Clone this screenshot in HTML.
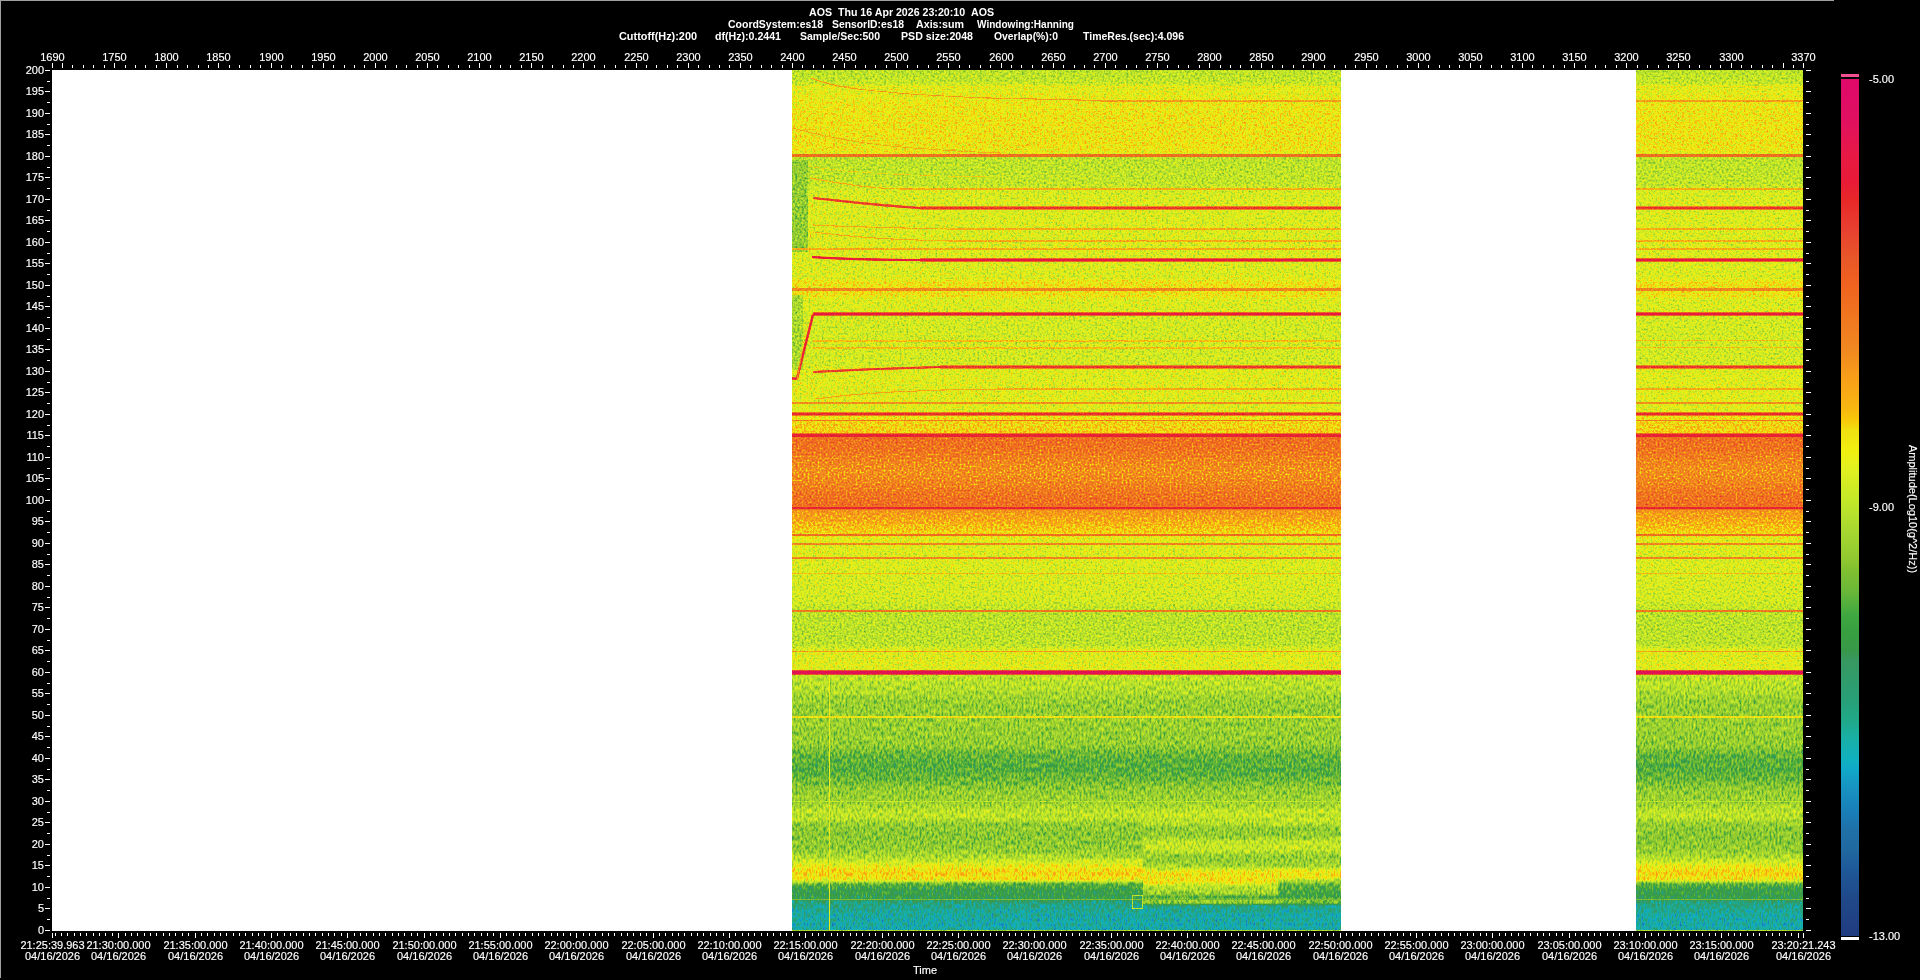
<!DOCTYPE html><html><head><meta charset="utf-8"><style>html,body{margin:0;padding:0;background:#000;overflow:hidden}svg{display:block;will-change:transform}text{font-family:"Liberation Sans", sans-serif;fill:#fff;stroke:#fff;stroke-width:0.15px}text[font-weight]{stroke:none}</style></head><body>
<svg width="1920" height="980" viewBox="0 0 1920 980" shape-rendering="crispEdges">
<defs><linearGradient id="sg" gradientUnits="userSpaceOnUse" x1="0" y1="70" x2="0" y2="931"><stop offset="0.0000" stop-color="#808080"/><stop offset="0.0139" stop-color="#828282"/><stop offset="0.0209" stop-color="#8c8c8c"/><stop offset="0.0325" stop-color="#8f8f8f"/><stop offset="0.0372" stop-color="#919191"/><stop offset="0.0581" stop-color="#939393"/><stop offset="0.0871" stop-color="#939393"/><stop offset="0.0952" stop-color="#919191"/><stop offset="0.1010" stop-color="#808080"/><stop offset="0.1336" stop-color="#828282"/><stop offset="0.1394" stop-color="#888888"/><stop offset="0.1568" stop-color="#8a8a8a"/><stop offset="0.2184" stop-color="#8a8a8a"/><stop offset="0.2416" stop-color="#8a8a8a"/><stop offset="0.2462" stop-color="#939393"/><stop offset="0.2625" stop-color="#939393"/><stop offset="0.2671" stop-color="#8a8a8a"/><stop offset="0.2811" stop-color="#8a8a8a"/><stop offset="0.2857" stop-color="#878787"/><stop offset="0.3426" stop-color="#878787"/><stop offset="0.3461" stop-color="#8b8b8b"/><stop offset="0.3972" stop-color="#8c8c8c"/><stop offset="0.4019" stop-color="#919191"/><stop offset="0.4088" stop-color="#989898"/><stop offset="0.4216" stop-color="#999999"/><stop offset="0.4274" stop-color="#bdbdbd"/><stop offset="0.4413" stop-color="#bababa"/><stop offset="0.4553" stop-color="#b1b1b1"/><stop offset="0.4669" stop-color="#adadad"/><stop offset="0.4785" stop-color="#b1b1b1"/><stop offset="0.4936" stop-color="#bababa"/><stop offset="0.5064" stop-color="#bdbdbd"/><stop offset="0.5110" stop-color="#ababab"/><stop offset="0.5226" stop-color="#a4a4a4"/><stop offset="0.5366" stop-color="#999999"/><stop offset="0.5459" stop-color="#8c8c8c"/><stop offset="0.6156" stop-color="#878787"/><stop offset="0.6295" stop-color="#808080"/><stop offset="0.6678" stop-color="#808080"/><stop offset="0.6736" stop-color="#8b8b8b"/><stop offset="0.6969" stop-color="#8c8c8c"/><stop offset="0.7038" stop-color="#808080"/><stop offset="0.7201" stop-color="#7d7d7d"/><stop offset="0.7317" stop-color="#757575"/><stop offset="0.7456" stop-color="#737373"/><stop offset="0.7549" stop-color="#757575"/><stop offset="0.7840" stop-color="#737373"/><stop offset="0.7967" stop-color="#666666"/><stop offset="0.8130" stop-color="#636363"/><stop offset="0.8246" stop-color="#696969"/><stop offset="0.8362" stop-color="#737373"/><stop offset="0.8502" stop-color="#757575"/><stop offset="0.8618" stop-color="#808080"/><stop offset="0.8688" stop-color="#808080"/><stop offset="0.8757" stop-color="#737373"/><stop offset="0.8885" stop-color="#707070"/><stop offset="0.9059" stop-color="#737373"/><stop offset="0.9152" stop-color="#7d7d7d"/><stop offset="0.9245" stop-color="#8f8f8f"/><stop offset="0.9326" stop-color="#999999"/><stop offset="0.9408" stop-color="#919191"/><stop offset="0.9454" stop-color="#666666"/><stop offset="0.9524" stop-color="#595959"/><stop offset="0.9617" stop-color="#575757"/><stop offset="0.9675" stop-color="#454545"/><stop offset="0.9814" stop-color="#3c3c3c"/><stop offset="1.0000" stop-color="#393939"/></linearGradient><linearGradient id="pg1" gradientUnits="userSpaceOnUse" x1="0" y1="780" x2="0" y2="906"><stop offset="0.0000" stop-color="#696969"/><stop offset="0.0794" stop-color="#737373"/><stop offset="0.1984" stop-color="#787878"/><stop offset="0.2540" stop-color="#828282"/><stop offset="0.3333" stop-color="#808080"/><stop offset="0.3810" stop-color="#737373"/><stop offset="0.4444" stop-color="#737373"/><stop offset="0.4921" stop-color="#828282"/><stop offset="0.5556" stop-color="#828282"/><stop offset="0.6032" stop-color="#737373"/><stop offset="0.6825" stop-color="#787878"/><stop offset="0.7302" stop-color="#939393"/><stop offset="0.8095" stop-color="#949494"/><stop offset="0.8413" stop-color="#808080"/><stop offset="0.9048" stop-color="#757575"/><stop offset="0.9286" stop-color="#5e5e5e"/><stop offset="0.9524" stop-color="#757575"/><stop offset="0.9762" stop-color="#737373"/><stop offset="1.0000" stop-color="#424242"/></linearGradient><linearGradient id="pg2" gradientUnits="userSpaceOnUse" x1="0" y1="878" x2="0" y2="906"><stop offset="0.0000" stop-color="#919191"/><stop offset="0.2143" stop-color="#666666"/><stop offset="0.6786" stop-color="#5c5c5c"/><stop offset="0.7857" stop-color="#6e6e6e"/><stop offset="0.8929" stop-color="#696969"/><stop offset="1.0000" stop-color="#424242"/></linearGradient><filter id="uf1" x="0" y="0" width="1" height="1" color-interpolation-filters="sRGB"><feTurbulence type="fractalNoise" baseFrequency="0.45" numOctaves="2" seed="3" result="t"/><feColorMatrix in="t" type="matrix" values="1 0 0 0 0 1 0 0 0 0 1 0 0 0 0 0 0 0 0 1" result="n0"/><feComponentTransfer in="n0" result="n"><feFuncR type="table" tableValues="0.000 0.080 0.185 0.290 0.395 0.500 0.580 0.660 0.740 0.820 0.900"/><feFuncG type="table" tableValues="0.000 0.080 0.185 0.290 0.395 0.500 0.580 0.660 0.740 0.820 0.900"/><feFuncB type="table" tableValues="0.000 0.080 0.185 0.290 0.395 0.500 0.580 0.660 0.740 0.820 0.900"/></feComponentTransfer><feComposite in="SourceGraphic" in2="n" operator="arithmetic" k1="0" k2="1" k3="0.3" k4="-0.15" result="v"/><feComponentTransfer in="v" result="c"><feFuncR type="table" tableValues="0.125 0.125 0.125 0.124 0.121 0.118 0.123 0.125 0.124 0.103 0.094 0.092 0.071 0.063 0.081 0.101 0.123 0.144 0.165 0.186 0.207 0.220 0.220 0.224 0.251 0.344 0.431 0.484 0.557 0.603 0.645 0.691 0.740 0.789 0.838 0.887 0.934 0.941 0.951 0.973 0.973 0.973 0.966 0.952 0.941 0.941 0.941 0.941 0.941 0.940 0.920 0.910 0.910 0.910 0.910 0.910 0.910 0.910 0.909 0.899 0.888 0.878 0.878 0.878 0.878"/><feFuncG type="table" tableValues="0.235 0.253 0.270 0.291 0.319 0.348 0.391 0.420 0.442 0.485 0.527 0.572 0.633 0.685 0.690 0.683 0.662 0.640 0.623 0.613 0.602 0.596 0.609 0.632 0.659 0.693 0.725 0.746 0.780 0.810 0.838 0.866 0.894 0.916 0.930 0.941 0.941 0.908 0.849 0.746 0.692 0.650 0.608 0.566 0.527 0.499 0.471 0.439 0.407 0.376 0.355 0.324 0.282 0.240 0.198 0.156 0.119 0.102 0.101 0.088 0.075 0.062 0.052 0.042 0.031"/><feFuncB type="table" tableValues="0.502 0.514 0.525 0.542 0.570 0.598 0.619 0.640 0.662 0.704 0.734 0.755 0.776 0.758 0.699 0.629 0.544 0.496 0.458 0.427 0.395 0.328 0.269 0.251 0.251 0.234 0.217 0.195 0.188 0.188 0.188 0.179 0.165 0.151 0.137 0.117 0.070 0.063 0.053 0.051 0.073 0.087 0.101 0.115 0.125 0.125 0.125 0.125 0.125 0.126 0.147 0.164 0.178 0.185 0.171 0.158 0.201 0.231 0.254 0.296 0.338 0.377 0.390 0.403 0.416"/></feComponentTransfer><feGaussianBlur in="c" stdDeviation="0.5" result="cb"/><feComposite in="cb" in2="SourceAlpha" operator="in"/></filter><filter id="uf2" x="0" y="0" width="1" height="1" color-interpolation-filters="sRGB"><feTurbulence type="fractalNoise" baseFrequency="0.45" numOctaves="2" seed="7" result="t"/><feColorMatrix in="t" type="matrix" values="1 0 0 0 0 1 0 0 0 0 1 0 0 0 0 0 0 0 0 1" result="n0"/><feComponentTransfer in="n0" result="n"><feFuncR type="table" tableValues="0.000 0.080 0.185 0.290 0.395 0.500 0.580 0.660 0.740 0.820 0.900"/><feFuncG type="table" tableValues="0.000 0.080 0.185 0.290 0.395 0.500 0.580 0.660 0.740 0.820 0.900"/><feFuncB type="table" tableValues="0.000 0.080 0.185 0.290 0.395 0.500 0.580 0.660 0.740 0.820 0.900"/></feComponentTransfer><feComposite in="SourceGraphic" in2="n" operator="arithmetic" k1="0" k2="1" k3="0.3" k4="-0.15" result="v"/><feComponentTransfer in="v" result="c"><feFuncR type="table" tableValues="0.125 0.125 0.125 0.124 0.121 0.118 0.123 0.125 0.124 0.103 0.094 0.092 0.071 0.063 0.081 0.101 0.123 0.144 0.165 0.186 0.207 0.220 0.220 0.224 0.251 0.344 0.431 0.484 0.557 0.603 0.645 0.691 0.740 0.789 0.838 0.887 0.934 0.941 0.951 0.973 0.973 0.973 0.966 0.952 0.941 0.941 0.941 0.941 0.941 0.940 0.920 0.910 0.910 0.910 0.910 0.910 0.910 0.910 0.909 0.899 0.888 0.878 0.878 0.878 0.878"/><feFuncG type="table" tableValues="0.235 0.253 0.270 0.291 0.319 0.348 0.391 0.420 0.442 0.485 0.527 0.572 0.633 0.685 0.690 0.683 0.662 0.640 0.623 0.613 0.602 0.596 0.609 0.632 0.659 0.693 0.725 0.746 0.780 0.810 0.838 0.866 0.894 0.916 0.930 0.941 0.941 0.908 0.849 0.746 0.692 0.650 0.608 0.566 0.527 0.499 0.471 0.439 0.407 0.376 0.355 0.324 0.282 0.240 0.198 0.156 0.119 0.102 0.101 0.088 0.075 0.062 0.052 0.042 0.031"/><feFuncB type="table" tableValues="0.502 0.514 0.525 0.542 0.570 0.598 0.619 0.640 0.662 0.704 0.734 0.755 0.776 0.758 0.699 0.629 0.544 0.496 0.458 0.427 0.395 0.328 0.269 0.251 0.251 0.234 0.217 0.195 0.188 0.188 0.188 0.179 0.165 0.151 0.137 0.117 0.070 0.063 0.053 0.051 0.073 0.087 0.101 0.115 0.125 0.125 0.125 0.125 0.125 0.126 0.147 0.164 0.178 0.185 0.171 0.158 0.201 0.231 0.254 0.296 0.338 0.377 0.390 0.403 0.416"/></feComponentTransfer><feGaussianBlur in="c" stdDeviation="0.5" result="cb"/><feComposite in="cb" in2="SourceAlpha" operator="in"/></filter><filter id="hf1" x="0" y="0" width="1" height="1" color-interpolation-filters="sRGB"><feTurbulence type="fractalNoise" baseFrequency="0.5" numOctaves="2" seed="17" result="t"/><feColorMatrix in="t" type="matrix" values="1 0 0 0 0 1 0 0 0 0 1 0 0 0 0 0 0 0 0 1" result="n0"/><feComponentTransfer in="n0" result="n"><feFuncR type="table" tableValues="0.000 0.080 0.185 0.290 0.395 0.500 0.580 0.660 0.740 0.820 0.900"/><feFuncG type="table" tableValues="0.000 0.080 0.185 0.290 0.395 0.500 0.580 0.660 0.740 0.820 0.900"/><feFuncB type="table" tableValues="0.000 0.080 0.185 0.290 0.395 0.500 0.580 0.660 0.740 0.820 0.900"/></feComponentTransfer><feComposite in="SourceGraphic" in2="n" operator="arithmetic" k1="0" k2="1" k3="0.42" k4="-0.21" result="v"/><feComponentTransfer in="v" result="c"><feFuncR type="table" tableValues="0.125 0.125 0.125 0.124 0.121 0.118 0.123 0.125 0.124 0.103 0.094 0.092 0.071 0.063 0.081 0.101 0.123 0.144 0.165 0.186 0.207 0.220 0.220 0.224 0.251 0.344 0.431 0.484 0.557 0.603 0.645 0.691 0.740 0.789 0.838 0.887 0.934 0.941 0.951 0.973 0.973 0.973 0.966 0.952 0.941 0.941 0.941 0.941 0.941 0.940 0.920 0.910 0.910 0.910 0.910 0.910 0.910 0.910 0.909 0.899 0.888 0.878 0.878 0.878 0.878"/><feFuncG type="table" tableValues="0.235 0.253 0.270 0.291 0.319 0.348 0.391 0.420 0.442 0.485 0.527 0.572 0.633 0.685 0.690 0.683 0.662 0.640 0.623 0.613 0.602 0.596 0.609 0.632 0.659 0.693 0.725 0.746 0.780 0.810 0.838 0.866 0.894 0.916 0.930 0.941 0.941 0.908 0.849 0.746 0.692 0.650 0.608 0.566 0.527 0.499 0.471 0.439 0.407 0.376 0.355 0.324 0.282 0.240 0.198 0.156 0.119 0.102 0.101 0.088 0.075 0.062 0.052 0.042 0.031"/><feFuncB type="table" tableValues="0.502 0.514 0.525 0.542 0.570 0.598 0.619 0.640 0.662 0.704 0.734 0.755 0.776 0.758 0.699 0.629 0.544 0.496 0.458 0.427 0.395 0.328 0.269 0.251 0.251 0.234 0.217 0.195 0.188 0.188 0.188 0.179 0.165 0.151 0.137 0.117 0.070 0.063 0.053 0.051 0.073 0.087 0.101 0.115 0.125 0.125 0.125 0.125 0.125 0.126 0.147 0.164 0.178 0.185 0.171 0.158 0.201 0.231 0.254 0.296 0.338 0.377 0.390 0.403 0.416"/></feComponentTransfer><feGaussianBlur in="c" stdDeviation="0.5" result="cb"/><feComposite in="cb" in2="SourceAlpha" operator="in"/></filter><filter id="hf2" x="0" y="0" width="1" height="1" color-interpolation-filters="sRGB"><feTurbulence type="fractalNoise" baseFrequency="0.5" numOctaves="2" seed="19" result="t"/><feColorMatrix in="t" type="matrix" values="1 0 0 0 0 1 0 0 0 0 1 0 0 0 0 0 0 0 0 1" result="n0"/><feComponentTransfer in="n0" result="n"><feFuncR type="table" tableValues="0.000 0.080 0.185 0.290 0.395 0.500 0.580 0.660 0.740 0.820 0.900"/><feFuncG type="table" tableValues="0.000 0.080 0.185 0.290 0.395 0.500 0.580 0.660 0.740 0.820 0.900"/><feFuncB type="table" tableValues="0.000 0.080 0.185 0.290 0.395 0.500 0.580 0.660 0.740 0.820 0.900"/></feComponentTransfer><feComposite in="SourceGraphic" in2="n" operator="arithmetic" k1="0" k2="1" k3="0.42" k4="-0.21" result="v"/><feComponentTransfer in="v" result="c"><feFuncR type="table" tableValues="0.125 0.125 0.125 0.124 0.121 0.118 0.123 0.125 0.124 0.103 0.094 0.092 0.071 0.063 0.081 0.101 0.123 0.144 0.165 0.186 0.207 0.220 0.220 0.224 0.251 0.344 0.431 0.484 0.557 0.603 0.645 0.691 0.740 0.789 0.838 0.887 0.934 0.941 0.951 0.973 0.973 0.973 0.966 0.952 0.941 0.941 0.941 0.941 0.941 0.940 0.920 0.910 0.910 0.910 0.910 0.910 0.910 0.910 0.909 0.899 0.888 0.878 0.878 0.878 0.878"/><feFuncG type="table" tableValues="0.235 0.253 0.270 0.291 0.319 0.348 0.391 0.420 0.442 0.485 0.527 0.572 0.633 0.685 0.690 0.683 0.662 0.640 0.623 0.613 0.602 0.596 0.609 0.632 0.659 0.693 0.725 0.746 0.780 0.810 0.838 0.866 0.894 0.916 0.930 0.941 0.941 0.908 0.849 0.746 0.692 0.650 0.608 0.566 0.527 0.499 0.471 0.439 0.407 0.376 0.355 0.324 0.282 0.240 0.198 0.156 0.119 0.102 0.101 0.088 0.075 0.062 0.052 0.042 0.031"/><feFuncB type="table" tableValues="0.502 0.514 0.525 0.542 0.570 0.598 0.619 0.640 0.662 0.704 0.734 0.755 0.776 0.758 0.699 0.629 0.544 0.496 0.458 0.427 0.395 0.328 0.269 0.251 0.251 0.234 0.217 0.195 0.188 0.188 0.188 0.179 0.165 0.151 0.137 0.117 0.070 0.063 0.053 0.051 0.073 0.087 0.101 0.115 0.125 0.125 0.125 0.125 0.125 0.126 0.147 0.164 0.178 0.185 0.171 0.158 0.201 0.231 0.254 0.296 0.338 0.377 0.390 0.403 0.416"/></feComponentTransfer><feGaussianBlur in="c" stdDeviation="0.5" result="cb"/><feComposite in="cb" in2="SourceAlpha" operator="in"/></filter><filter id="bf1" x="0" y="0" width="1" height="1" color-interpolation-filters="sRGB"><feTurbulence type="fractalNoise" baseFrequency="0.5 0.22" numOctaves="2" seed="5" result="t"/><feColorMatrix in="t" type="matrix" values="1 0 0 0 0 1 0 0 0 0 1 0 0 0 0 0 0 0 0 1" result="n0"/><feComponentTransfer in="n0" result="n"><feFuncR type="table" tableValues="0.000 0.080 0.185 0.290 0.395 0.500 0.580 0.660 0.740 0.820 0.900"/><feFuncG type="table" tableValues="0.000 0.080 0.185 0.290 0.395 0.500 0.580 0.660 0.740 0.820 0.900"/><feFuncB type="table" tableValues="0.000 0.080 0.185 0.290 0.395 0.500 0.580 0.660 0.740 0.820 0.900"/></feComponentTransfer><feComposite in="SourceGraphic" in2="n" operator="arithmetic" k1="0" k2="1" k3="0.3" k4="-0.15" result="v"/><feComponentTransfer in="v" result="c"><feFuncR type="table" tableValues="0.125 0.125 0.125 0.124 0.121 0.118 0.123 0.125 0.124 0.103 0.094 0.092 0.071 0.063 0.081 0.101 0.123 0.144 0.165 0.186 0.207 0.220 0.220 0.224 0.251 0.344 0.431 0.484 0.557 0.603 0.645 0.691 0.740 0.789 0.838 0.887 0.934 0.941 0.951 0.973 0.973 0.973 0.966 0.952 0.941 0.941 0.941 0.941 0.941 0.940 0.920 0.910 0.910 0.910 0.910 0.910 0.910 0.910 0.909 0.899 0.888 0.878 0.878 0.878 0.878"/><feFuncG type="table" tableValues="0.235 0.253 0.270 0.291 0.319 0.348 0.391 0.420 0.442 0.485 0.527 0.572 0.633 0.685 0.690 0.683 0.662 0.640 0.623 0.613 0.602 0.596 0.609 0.632 0.659 0.693 0.725 0.746 0.780 0.810 0.838 0.866 0.894 0.916 0.930 0.941 0.941 0.908 0.849 0.746 0.692 0.650 0.608 0.566 0.527 0.499 0.471 0.439 0.407 0.376 0.355 0.324 0.282 0.240 0.198 0.156 0.119 0.102 0.101 0.088 0.075 0.062 0.052 0.042 0.031"/><feFuncB type="table" tableValues="0.502 0.514 0.525 0.542 0.570 0.598 0.619 0.640 0.662 0.704 0.734 0.755 0.776 0.758 0.699 0.629 0.544 0.496 0.458 0.427 0.395 0.328 0.269 0.251 0.251 0.234 0.217 0.195 0.188 0.188 0.188 0.179 0.165 0.151 0.137 0.117 0.070 0.063 0.053 0.051 0.073 0.087 0.101 0.115 0.125 0.125 0.125 0.125 0.125 0.126 0.147 0.164 0.178 0.185 0.171 0.158 0.201 0.231 0.254 0.296 0.338 0.377 0.390 0.403 0.416"/></feComponentTransfer><feGaussianBlur in="c" stdDeviation="0.5" result="cb"/><feComposite in="cb" in2="SourceAlpha" operator="in"/></filter><filter id="bf2" x="0" y="0" width="1" height="1" color-interpolation-filters="sRGB"><feTurbulence type="fractalNoise" baseFrequency="0.5 0.22" numOctaves="2" seed="9" result="t"/><feColorMatrix in="t" type="matrix" values="1 0 0 0 0 1 0 0 0 0 1 0 0 0 0 0 0 0 0 1" result="n0"/><feComponentTransfer in="n0" result="n"><feFuncR type="table" tableValues="0.000 0.080 0.185 0.290 0.395 0.500 0.580 0.660 0.740 0.820 0.900"/><feFuncG type="table" tableValues="0.000 0.080 0.185 0.290 0.395 0.500 0.580 0.660 0.740 0.820 0.900"/><feFuncB type="table" tableValues="0.000 0.080 0.185 0.290 0.395 0.500 0.580 0.660 0.740 0.820 0.900"/></feComponentTransfer><feComposite in="SourceGraphic" in2="n" operator="arithmetic" k1="0" k2="1" k3="0.3" k4="-0.15" result="v"/><feComponentTransfer in="v" result="c"><feFuncR type="table" tableValues="0.125 0.125 0.125 0.124 0.121 0.118 0.123 0.125 0.124 0.103 0.094 0.092 0.071 0.063 0.081 0.101 0.123 0.144 0.165 0.186 0.207 0.220 0.220 0.224 0.251 0.344 0.431 0.484 0.557 0.603 0.645 0.691 0.740 0.789 0.838 0.887 0.934 0.941 0.951 0.973 0.973 0.973 0.966 0.952 0.941 0.941 0.941 0.941 0.941 0.940 0.920 0.910 0.910 0.910 0.910 0.910 0.910 0.910 0.909 0.899 0.888 0.878 0.878 0.878 0.878"/><feFuncG type="table" tableValues="0.235 0.253 0.270 0.291 0.319 0.348 0.391 0.420 0.442 0.485 0.527 0.572 0.633 0.685 0.690 0.683 0.662 0.640 0.623 0.613 0.602 0.596 0.609 0.632 0.659 0.693 0.725 0.746 0.780 0.810 0.838 0.866 0.894 0.916 0.930 0.941 0.941 0.908 0.849 0.746 0.692 0.650 0.608 0.566 0.527 0.499 0.471 0.439 0.407 0.376 0.355 0.324 0.282 0.240 0.198 0.156 0.119 0.102 0.101 0.088 0.075 0.062 0.052 0.042 0.031"/><feFuncB type="table" tableValues="0.502 0.514 0.525 0.542 0.570 0.598 0.619 0.640 0.662 0.704 0.734 0.755 0.776 0.758 0.699 0.629 0.544 0.496 0.458 0.427 0.395 0.328 0.269 0.251 0.251 0.234 0.217 0.195 0.188 0.188 0.188 0.179 0.165 0.151 0.137 0.117 0.070 0.063 0.053 0.051 0.073 0.087 0.101 0.115 0.125 0.125 0.125 0.125 0.125 0.126 0.147 0.164 0.178 0.185 0.171 0.158 0.201 0.231 0.254 0.296 0.338 0.377 0.390 0.403 0.416"/></feComponentTransfer><feGaussianBlur in="c" stdDeviation="0.5" result="cb"/><feComposite in="cb" in2="SourceAlpha" operator="in"/></filter><filter id="lf1" x="0" y="0" width="1" height="1" color-interpolation-filters="sRGB"><feTurbulence type="fractalNoise" baseFrequency="0.7" numOctaves="2" seed="11" result="t"/><feColorMatrix in="t" type="matrix" values="1 0 0 0 0 1 0 0 0 0 1 0 0 0 0 0 0 0 0 1" result="n0"/><feComponentTransfer in="n0" result="n"><feFuncR type="table" tableValues="0.000 0.080 0.185 0.290 0.395 0.500 0.580 0.660 0.740 0.820 0.900"/><feFuncG type="table" tableValues="0.000 0.080 0.185 0.290 0.395 0.500 0.580 0.660 0.740 0.820 0.900"/><feFuncB type="table" tableValues="0.000 0.080 0.185 0.290 0.395 0.500 0.580 0.660 0.740 0.820 0.900"/></feComponentTransfer><feComposite in="SourceGraphic" in2="n" operator="arithmetic" k1="0" k2="1" k3="0.22" k4="-0.11" result="v"/><feComponentTransfer in="v" result="c"><feFuncR type="table" tableValues="0.125 0.125 0.125 0.124 0.121 0.118 0.123 0.125 0.124 0.103 0.094 0.092 0.071 0.063 0.081 0.101 0.123 0.144 0.165 0.186 0.207 0.220 0.220 0.224 0.251 0.344 0.431 0.484 0.557 0.603 0.645 0.691 0.740 0.789 0.838 0.887 0.934 0.941 0.951 0.973 0.973 0.973 0.966 0.952 0.941 0.941 0.941 0.941 0.941 0.940 0.920 0.910 0.910 0.910 0.910 0.910 0.910 0.910 0.909 0.899 0.888 0.878 0.878 0.878 0.878"/><feFuncG type="table" tableValues="0.235 0.253 0.270 0.291 0.319 0.348 0.391 0.420 0.442 0.485 0.527 0.572 0.633 0.685 0.690 0.683 0.662 0.640 0.623 0.613 0.602 0.596 0.609 0.632 0.659 0.693 0.725 0.746 0.780 0.810 0.838 0.866 0.894 0.916 0.930 0.941 0.941 0.908 0.849 0.746 0.692 0.650 0.608 0.566 0.527 0.499 0.471 0.439 0.407 0.376 0.355 0.324 0.282 0.240 0.198 0.156 0.119 0.102 0.101 0.088 0.075 0.062 0.052 0.042 0.031"/><feFuncB type="table" tableValues="0.502 0.514 0.525 0.542 0.570 0.598 0.619 0.640 0.662 0.704 0.734 0.755 0.776 0.758 0.699 0.629 0.544 0.496 0.458 0.427 0.395 0.328 0.269 0.251 0.251 0.234 0.217 0.195 0.188 0.188 0.188 0.179 0.165 0.151 0.137 0.117 0.070 0.063 0.053 0.051 0.073 0.087 0.101 0.115 0.125 0.125 0.125 0.125 0.125 0.126 0.147 0.164 0.178 0.185 0.171 0.158 0.201 0.231 0.254 0.296 0.338 0.377 0.390 0.403 0.416"/></feComponentTransfer><feGaussianBlur in="c" stdDeviation="0.5" result="cb"/><feComposite in="cb" in2="SourceAlpha" operator="in"/></filter><filter id="lf2" x="0" y="0" width="1" height="1" color-interpolation-filters="sRGB"><feTurbulence type="fractalNoise" baseFrequency="0.7" numOctaves="2" seed="13" result="t"/><feColorMatrix in="t" type="matrix" values="1 0 0 0 0 1 0 0 0 0 1 0 0 0 0 0 0 0 0 1" result="n0"/><feComponentTransfer in="n0" result="n"><feFuncR type="table" tableValues="0.000 0.080 0.185 0.290 0.395 0.500 0.580 0.660 0.740 0.820 0.900"/><feFuncG type="table" tableValues="0.000 0.080 0.185 0.290 0.395 0.500 0.580 0.660 0.740 0.820 0.900"/><feFuncB type="table" tableValues="0.000 0.080 0.185 0.290 0.395 0.500 0.580 0.660 0.740 0.820 0.900"/></feComponentTransfer><feComposite in="SourceGraphic" in2="n" operator="arithmetic" k1="0" k2="1" k3="0.22" k4="-0.11" result="v"/><feComponentTransfer in="v" result="c"><feFuncR type="table" tableValues="0.125 0.125 0.125 0.124 0.121 0.118 0.123 0.125 0.124 0.103 0.094 0.092 0.071 0.063 0.081 0.101 0.123 0.144 0.165 0.186 0.207 0.220 0.220 0.224 0.251 0.344 0.431 0.484 0.557 0.603 0.645 0.691 0.740 0.789 0.838 0.887 0.934 0.941 0.951 0.973 0.973 0.973 0.966 0.952 0.941 0.941 0.941 0.941 0.941 0.940 0.920 0.910 0.910 0.910 0.910 0.910 0.910 0.910 0.909 0.899 0.888 0.878 0.878 0.878 0.878"/><feFuncG type="table" tableValues="0.235 0.253 0.270 0.291 0.319 0.348 0.391 0.420 0.442 0.485 0.527 0.572 0.633 0.685 0.690 0.683 0.662 0.640 0.623 0.613 0.602 0.596 0.609 0.632 0.659 0.693 0.725 0.746 0.780 0.810 0.838 0.866 0.894 0.916 0.930 0.941 0.941 0.908 0.849 0.746 0.692 0.650 0.608 0.566 0.527 0.499 0.471 0.439 0.407 0.376 0.355 0.324 0.282 0.240 0.198 0.156 0.119 0.102 0.101 0.088 0.075 0.062 0.052 0.042 0.031"/><feFuncB type="table" tableValues="0.502 0.514 0.525 0.542 0.570 0.598 0.619 0.640 0.662 0.704 0.734 0.755 0.776 0.758 0.699 0.629 0.544 0.496 0.458 0.427 0.395 0.328 0.269 0.251 0.251 0.234 0.217 0.195 0.188 0.188 0.188 0.179 0.165 0.151 0.137 0.117 0.070 0.063 0.053 0.051 0.073 0.087 0.101 0.115 0.125 0.125 0.125 0.125 0.125 0.126 0.147 0.164 0.178 0.185 0.171 0.158 0.201 0.231 0.254 0.296 0.338 0.377 0.390 0.403 0.416"/></feComponentTransfer><feGaussianBlur in="c" stdDeviation="0.5" result="cb"/><feComposite in="cb" in2="SourceAlpha" operator="in"/></filter><linearGradient id="cb" x1="0" y1="0" x2="0" y2="1"><stop offset="0.0000" stop-color="#e0086a"/><stop offset="0.0480" stop-color="#e01060"/><stop offset="0.0950" stop-color="#e81a40"/><stop offset="0.1180" stop-color="#e81a38"/><stop offset="0.1410" stop-color="#e82828"/><stop offset="0.1760" stop-color="#e84030"/><stop offset="0.2110" stop-color="#e85828"/><stop offset="0.2350" stop-color="#f06020"/><stop offset="0.2810" stop-color="#f07820"/><stop offset="0.3160" stop-color="#f08820"/><stop offset="0.3510" stop-color="#f8a018"/><stop offset="0.3860" stop-color="#f8b810"/><stop offset="0.3980" stop-color="#f8c808"/><stop offset="0.4100" stop-color="#f0e010"/><stop offset="0.4350" stop-color="#f0f010"/><stop offset="0.4560" stop-color="#e0f020"/><stop offset="0.4910" stop-color="#c4e828"/><stop offset="0.5260" stop-color="#a8d830"/><stop offset="0.5610" stop-color="#90c830"/><stop offset="0.5730" stop-color="#80c030"/><stop offset="0.5960" stop-color="#6cb838"/><stop offset="0.6250" stop-color="#40a840"/><stop offset="0.6430" stop-color="#38a040"/><stop offset="0.6660" stop-color="#389848"/><stop offset="0.6780" stop-color="#389860"/><stop offset="0.7250" stop-color="#28a078"/><stop offset="0.7480" stop-color="#20a888"/><stop offset="0.7710" stop-color="#18b0a8"/><stop offset="0.7950" stop-color="#10b0c0"/><stop offset="0.8060" stop-color="#10a8c8"/><stop offset="0.8300" stop-color="#1890c0"/><stop offset="0.8530" stop-color="#1880b8"/><stop offset="0.8760" stop-color="#2070a8"/><stop offset="0.9000" stop-color="#2068a0"/><stop offset="0.9230" stop-color="#1e5898"/><stop offset="0.9580" stop-color="#204888"/><stop offset="1.0000" stop-color="#203c80"/></linearGradient></defs>
<rect x="0" y="0" width="1834" height="1" fill="#a0a0a0"/><rect x="0" y="0" width="1" height="978" fill="#a0a0a0"/>
<rect x="52" y="70" width="1751" height="861" fill="#fff"/>
<g filter="url(#hf1)"><rect x="792" y="436" width="549" height="72" fill="url(#sg)"/></g>
<g filter="url(#uf1)"><rect x="792" y="70" width="549" height="366" fill="url(#sg)"/><rect x="792" y="508" width="549" height="168" fill="url(#sg)"/>
<rect x="792" y="160" width="16" height="92" fill="#737373"/>
<rect x="792" y="295" width="11" height="75" fill="#7a7a7a"/>
</g>
<g filter="url(#bf1)"><rect x="792" y="676" width="549" height="255" fill="url(#sg)"/>
<rect x="1143" y="780" width="198" height="126" fill="url(#pg1)"/>
<rect x="1278" y="878" width="63" height="28" fill="url(#pg2)"/>
</g>
<g filter="url(#lf1)">
<rect x="792" y="86" width="549" height="1" fill="#949494"/>
<rect x="1100" y="100" width="241" height="2" fill="#a8a8a8"/>
<rect x="792" y="154" width="549" height="3" fill="#bdbdbd"/>
<rect x="900" y="188" width="441" height="2" fill="#a3a3a3"/>
<rect x="920" y="206" width="421" height="4" fill="#b2b2b2"/>
<rect x="920" y="207" width="421" height="2" fill="#d6d6d6"/>
<rect x="792" y="248" width="549" height="2" fill="#a3a3a3"/>
<rect x="920" y="258" width="421" height="4" fill="#c2c2c2"/>
<rect x="920" y="259" width="421" height="2" fill="#e6e6e6"/>
<rect x="792" y="288" width="549" height="3" fill="#b2b2b2"/>
<rect x="813" y="312" width="528" height="4" fill="#c2c2c2"/>
<rect x="813" y="313" width="528" height="2" fill="#e6e6e6"/>
<rect x="940" y="365" width="401" height="4" fill="#b2b2b2"/>
<rect x="940" y="366" width="401" height="2" fill="#d6d6d6"/>
<rect x="792" y="402" width="549" height="2" fill="#adadad"/>
<rect x="792" y="412" width="549" height="4" fill="#b8b8b8"/>
<rect x="792" y="413" width="549" height="2" fill="#dbdbdb"/>
<rect x="792" y="420" width="549" height="1" fill="#b8b8b8"/>
<rect x="792" y="433" width="549" height="5" fill="#bdbdbd"/>
<rect x="792" y="434" width="549" height="3" fill="#e0e0e0"/>
<rect x="792" y="506" width="549" height="4" fill="#bababa"/>
<rect x="792" y="507" width="549" height="2" fill="#dedede"/>
<rect x="792" y="534" width="549" height="2" fill="#bdbdbd"/>
<rect x="792" y="543" width="549" height="2" fill="#b2b2b2"/>
<rect x="792" y="557" width="549" height="2" fill="#b2b2b2"/>
<rect x="792" y="573" width="549" height="1" fill="#9e9e9e"/>
<rect x="792" y="610" width="549" height="2" fill="#b8b8b8"/>
<rect x="792" y="651" width="549" height="1" fill="#a8a8a8"/>
<rect x="792" y="670" width="549" height="5" fill="#cccccc"/>
<rect x="792" y="671" width="549" height="3" fill="#f0f0f0"/>
<rect x="792" y="716" width="549" height="2" fill="#949494"/>
<rect x="792" y="801" width="549" height="1" fill="#808080"/>
<rect x="792" y="899" width="549" height="1" fill="#6b6b6b"/>
<rect x="792" y="930" width="549" height="1" fill="#787878"/>
<path d="M811 78 C830 86 860 93 988 98 L1100 100.5" fill="none" stroke="#a8a8a8" stroke-width="2" shape-rendering="geometricPrecision"/>
<path d="M792 128 C830 138 870 148 1000 153" fill="none" stroke="#a3a3a3" stroke-width="2" shape-rendering="geometricPrecision"/>
<path d="M813 198 C835 200 870 205 920 208" fill="none" stroke="#b2b2b2" stroke-width="3.2" shape-rendering="geometricPrecision"/>
<path d="M813 198 C835 200 870 205 920 208" fill="none" stroke="#d6d6d6" stroke-width="2" shape-rendering="geometricPrecision"/>
<path d="M808 166 C840 172 900 176 1000 177" fill="none" stroke="#999999" stroke-width="1.5" shape-rendering="geometricPrecision"/>
<path d="M810 178 C840 184 870 188 900 189" fill="none" stroke="#a3a3a3" stroke-width="2" shape-rendering="geometricPrecision"/>
<path d="M813 198 L809 258" fill="none" stroke="#a8a8a8" stroke-width="1" shape-rendering="geometricPrecision"/>
<path d="M812 257 C840 259 880 260 920 260" fill="none" stroke="#c2c2c2" stroke-width="3.2" shape-rendering="geometricPrecision"/>
<path d="M812 257 C840 259 880 260 920 260" fill="none" stroke="#e6e6e6" stroke-width="2" shape-rendering="geometricPrecision"/>
<path d="M813 225 C850 227 900 228 950 229" fill="none" stroke="#a3a3a3" stroke-width="2" shape-rendering="geometricPrecision"/>
<path d="M813 232 C850 237 900 240 950 241" fill="none" stroke="#a3a3a3" stroke-width="2" shape-rendering="geometricPrecision"/>
<rect x="950" y="228" width="391" height="2" fill="#a3a3a3"/>
<rect x="950" y="240" width="391" height="2" fill="#a3a3a3"/>
<path d="M797 378.5 L813 314.5" fill="none" stroke="#bdbdbd" stroke-width="3.2" shape-rendering="geometricPrecision"/>
<path d="M797 378.5 L813 314.5" fill="none" stroke="#e0e0e0" stroke-width="2" shape-rendering="geometricPrecision"/>
<path d="M792 378.5 L798 378.5" fill="none" stroke="#bdbdbd" stroke-width="3.2" shape-rendering="geometricPrecision"/>
<path d="M792 378.5 L798 378.5" fill="none" stroke="#e0e0e0" stroke-width="2" shape-rendering="geometricPrecision"/>
<path d="M795 392 L807 322" fill="none" stroke="#a8a8a8" stroke-width="1" shape-rendering="geometricPrecision"/>
<path d="M813 372 C850 370 900 368 940 367" fill="none" stroke="#b2b2b2" stroke-width="3.0" shape-rendering="geometricPrecision"/>
<path d="M813 372 C850 370 900 368 940 367" fill="none" stroke="#d6d6d6" stroke-width="1.8" shape-rendering="geometricPrecision"/>
<path d="M813 371 L810 392" fill="none" stroke="#a8a8a8" stroke-width="1" shape-rendering="geometricPrecision"/>
<path d="M815 399 C850 394 900 390 1000 389" fill="none" stroke="#a3a3a3" stroke-width="2" shape-rendering="geometricPrecision"/>
<rect x="1000" y="388" width="341" height="2" fill="#a3a3a3"/>
<rect x="813" y="340" width="528" height="2" fill="#9e9e9e"/>
<rect x="813" y="347" width="528" height="2" fill="#9e9e9e"/>
<rect x="1132.5" y="895.5" width="10" height="13" fill="none" stroke="#808080" stroke-width="1"/>
<rect x="829" y="676" width="1" height="254" fill="#8f8f8f"/>
</g>
<g filter="url(#hf2)"><rect x="1636" y="436" width="167" height="72" fill="url(#sg)"/></g>
<g filter="url(#uf2)"><rect x="1636" y="70" width="167" height="366" fill="url(#sg)"/><rect x="1636" y="508" width="167" height="168" fill="url(#sg)"/>
</g>
<g filter="url(#bf2)"><rect x="1636" y="676" width="167" height="255" fill="url(#sg)"/>
</g>
<g filter="url(#lf2)">
<rect x="1636" y="86" width="167" height="1" fill="#949494"/>
<rect x="1636" y="100" width="167" height="2" fill="#a8a8a8"/>
<rect x="1636" y="154" width="167" height="3" fill="#bdbdbd"/>
<rect x="1636" y="188" width="167" height="2" fill="#a3a3a3"/>
<rect x="1636" y="206" width="167" height="4" fill="#b2b2b2"/>
<rect x="1636" y="207" width="167" height="2" fill="#d6d6d6"/>
<rect x="1636" y="248" width="167" height="2" fill="#a3a3a3"/>
<rect x="1636" y="258" width="167" height="4" fill="#c2c2c2"/>
<rect x="1636" y="259" width="167" height="2" fill="#e6e6e6"/>
<rect x="1636" y="288" width="167" height="3" fill="#b2b2b2"/>
<rect x="1636" y="312" width="167" height="4" fill="#c2c2c2"/>
<rect x="1636" y="313" width="167" height="2" fill="#e6e6e6"/>
<rect x="1636" y="365" width="167" height="4" fill="#b2b2b2"/>
<rect x="1636" y="366" width="167" height="2" fill="#d6d6d6"/>
<rect x="1636" y="402" width="167" height="2" fill="#adadad"/>
<rect x="1636" y="412" width="167" height="4" fill="#b8b8b8"/>
<rect x="1636" y="413" width="167" height="2" fill="#dbdbdb"/>
<rect x="1636" y="420" width="167" height="1" fill="#b8b8b8"/>
<rect x="1636" y="433" width="167" height="5" fill="#bdbdbd"/>
<rect x="1636" y="434" width="167" height="3" fill="#e0e0e0"/>
<rect x="1636" y="506" width="167" height="4" fill="#bababa"/>
<rect x="1636" y="507" width="167" height="2" fill="#dedede"/>
<rect x="1636" y="534" width="167" height="2" fill="#bdbdbd"/>
<rect x="1636" y="543" width="167" height="2" fill="#b2b2b2"/>
<rect x="1636" y="557" width="167" height="2" fill="#b2b2b2"/>
<rect x="1636" y="573" width="167" height="1" fill="#9e9e9e"/>
<rect x="1636" y="610" width="167" height="2" fill="#b8b8b8"/>
<rect x="1636" y="651" width="167" height="1" fill="#a8a8a8"/>
<rect x="1636" y="670" width="167" height="5" fill="#cccccc"/>
<rect x="1636" y="671" width="167" height="3" fill="#f0f0f0"/>
<rect x="1636" y="716" width="167" height="2" fill="#949494"/>
<rect x="1636" y="801" width="167" height="1" fill="#808080"/>
<rect x="1636" y="899" width="167" height="1" fill="#6b6b6b"/>
<rect x="1636" y="930" width="167" height="1" fill="#787878"/>
<rect x="1636" y="188" width="167" height="2" fill="#a3a3a3"/>
<rect x="1636" y="228" width="167" height="2" fill="#a3a3a3"/>
<rect x="1636" y="240" width="167" height="2" fill="#a3a3a3"/>
<rect x="1636" y="340" width="167" height="1" fill="#9e9e9e"/>
<rect x="1636" y="347" width="167" height="1" fill="#9e9e9e"/>
<rect x="1636" y="388" width="167" height="2" fill="#a3a3a3"/>
</g>
<path fill="#fff" d="M45 930h5v1h-5zM1806 930h5v1h-5zM47 919h3v1h-3zM1806 919h3v1h-3zM45 908h5v1h-5zM1806 908h5v1h-5zM47 898h3v1h-3zM1806 898h3v1h-3zM45 887h5v1h-5zM1806 887h5v1h-5zM47 876h3v1h-3zM1806 876h3v1h-3zM45 865h5v1h-5zM1806 865h5v1h-5zM47 855h3v1h-3zM1806 855h3v1h-3zM45 844h5v1h-5zM1806 844h5v1h-5zM47 833h3v1h-3zM1806 833h3v1h-3zM45 822h5v1h-5zM1806 822h5v1h-5zM47 812h3v1h-3zM1806 812h3v1h-3zM45 801h5v1h-5zM1806 801h5v1h-5zM47 790h3v1h-3zM1806 790h3v1h-3zM45 779h5v1h-5zM1806 779h5v1h-5zM47 769h3v1h-3zM1806 769h3v1h-3zM45 758h5v1h-5zM1806 758h5v1h-5zM47 747h3v1h-3zM1806 747h3v1h-3zM45 736h5v1h-5zM1806 736h5v1h-5zM47 726h3v1h-3zM1806 726h3v1h-3zM45 715h5v1h-5zM1806 715h5v1h-5zM47 704h3v1h-3zM1806 704h3v1h-3zM45 693h5v1h-5zM1806 693h5v1h-5zM47 683h3v1h-3zM1806 683h3v1h-3zM45 672h5v1h-5zM1806 672h5v1h-5zM47 661h3v1h-3zM1806 661h3v1h-3zM45 650h5v1h-5zM1806 650h5v1h-5zM47 640h3v1h-3zM1806 640h3v1h-3zM45 629h5v1h-5zM1806 629h5v1h-5zM47 618h3v1h-3zM1806 618h3v1h-3zM45 607h5v1h-5zM1806 607h5v1h-5zM47 597h3v1h-3zM1806 597h3v1h-3zM45 586h5v1h-5zM1806 586h5v1h-5zM47 575h3v1h-3zM1806 575h3v1h-3zM45 564h5v1h-5zM1806 564h5v1h-5zM47 554h3v1h-3zM1806 554h3v1h-3zM45 543h5v1h-5zM1806 543h5v1h-5zM47 532h3v1h-3zM1806 532h3v1h-3zM45 521h5v1h-5zM1806 521h5v1h-5zM47 511h3v1h-3zM1806 511h3v1h-3zM45 500h5v1h-5zM1806 500h5v1h-5zM47 489h3v1h-3zM1806 489h3v1h-3zM45 478h5v1h-5zM1806 478h5v1h-5zM47 468h3v1h-3zM1806 468h3v1h-3zM45 457h5v1h-5zM1806 457h5v1h-5zM47 446h3v1h-3zM1806 446h3v1h-3zM45 435h5v1h-5zM1806 435h5v1h-5zM47 425h3v1h-3zM1806 425h3v1h-3zM45 414h5v1h-5zM1806 414h5v1h-5zM47 403h3v1h-3zM1806 403h3v1h-3zM45 392h5v1h-5zM1806 392h5v1h-5zM47 382h3v1h-3zM1806 382h3v1h-3zM45 371h5v1h-5zM1806 371h5v1h-5zM47 360h3v1h-3zM1806 360h3v1h-3zM45 349h5v1h-5zM1806 349h5v1h-5zM47 339h3v1h-3zM1806 339h3v1h-3zM45 328h5v1h-5zM1806 328h5v1h-5zM47 317h3v1h-3zM1806 317h3v1h-3zM45 306h5v1h-5zM1806 306h5v1h-5zM47 296h3v1h-3zM1806 296h3v1h-3zM45 285h5v1h-5zM1806 285h5v1h-5zM47 274h3v1h-3zM1806 274h3v1h-3zM45 263h5v1h-5zM1806 263h5v1h-5zM47 253h3v1h-3zM1806 253h3v1h-3zM45 242h5v1h-5zM1806 242h5v1h-5zM47 231h3v1h-3zM1806 231h3v1h-3zM45 220h5v1h-5zM1806 220h5v1h-5zM47 210h3v1h-3zM1806 210h3v1h-3zM45 199h5v1h-5zM1806 199h5v1h-5zM47 188h3v1h-3zM1806 188h3v1h-3zM45 177h5v1h-5zM1806 177h5v1h-5zM47 167h3v1h-3zM1806 167h3v1h-3zM45 156h5v1h-5zM1806 156h5v1h-5zM47 145h3v1h-3zM1806 145h3v1h-3zM45 134h5v1h-5zM1806 134h5v1h-5zM47 124h3v1h-3zM1806 124h3v1h-3zM45 113h5v1h-5zM1806 113h5v1h-5zM47 102h3v1h-3zM1806 102h3v1h-3zM45 91h5v1h-5zM1806 91h5v1h-5zM47 81h3v1h-3zM1806 81h3v1h-3zM45 70h5v1h-5zM1806 70h5v1h-5zM52 63h1v5h-1zM62 63h1v5h-1zM72 65h1v3h-1zM83 65h1v3h-1zM93 65h1v3h-1zM104 65h1v3h-1zM114 63h1v5h-1zM125 65h1v3h-1zM135 65h1v3h-1zM145 65h1v3h-1zM156 65h1v3h-1zM166 63h1v5h-1zM177 65h1v3h-1zM187 65h1v3h-1zM198 65h1v3h-1zM208 65h1v3h-1zM218 63h1v5h-1zM229 65h1v3h-1zM239 65h1v3h-1zM250 65h1v3h-1zM260 65h1v3h-1zM271 63h1v5h-1zM281 65h1v3h-1zM291 65h1v3h-1zM302 65h1v3h-1zM312 65h1v3h-1zM323 63h1v5h-1zM333 65h1v3h-1zM344 65h1v3h-1zM354 65h1v3h-1zM364 65h1v3h-1zM375 63h1v5h-1zM385 65h1v3h-1zM396 65h1v3h-1zM406 65h1v3h-1zM417 65h1v3h-1zM427 63h1v5h-1zM437 65h1v3h-1zM448 65h1v3h-1zM458 65h1v3h-1zM469 65h1v3h-1zM479 63h1v5h-1zM490 65h1v3h-1zM500 65h1v3h-1zM510 65h1v3h-1zM521 65h1v3h-1zM531 63h1v5h-1zM542 65h1v3h-1zM552 65h1v3h-1zM563 65h1v3h-1zM573 65h1v3h-1zM583 63h1v5h-1zM594 65h1v3h-1zM604 65h1v3h-1zM615 65h1v3h-1zM625 65h1v3h-1zM636 63h1v5h-1zM646 65h1v3h-1zM656 65h1v3h-1zM667 65h1v3h-1zM677 65h1v3h-1zM688 63h1v5h-1zM698 65h1v3h-1zM709 65h1v3h-1zM719 65h1v3h-1zM729 65h1v3h-1zM740 63h1v5h-1zM750 65h1v3h-1zM761 65h1v3h-1zM771 65h1v3h-1zM782 65h1v3h-1zM792 63h1v5h-1zM802 65h1v3h-1zM813 65h1v3h-1zM823 65h1v3h-1zM834 65h1v3h-1zM844 63h1v5h-1zM855 65h1v3h-1zM865 65h1v3h-1zM875 65h1v3h-1zM886 65h1v3h-1zM896 63h1v5h-1zM907 65h1v3h-1zM917 65h1v3h-1zM928 65h1v3h-1zM938 65h1v3h-1zM948 63h1v5h-1zM959 65h1v3h-1zM969 65h1v3h-1zM980 65h1v3h-1zM990 65h1v3h-1zM1001 63h1v5h-1zM1011 65h1v3h-1zM1021 65h1v3h-1zM1032 65h1v3h-1zM1042 65h1v3h-1zM1053 63h1v5h-1zM1063 65h1v3h-1zM1074 65h1v3h-1zM1084 65h1v3h-1zM1094 65h1v3h-1zM1105 63h1v5h-1zM1115 65h1v3h-1zM1126 65h1v3h-1zM1136 65h1v3h-1zM1147 65h1v3h-1zM1157 63h1v5h-1zM1167 65h1v3h-1zM1178 65h1v3h-1zM1188 65h1v3h-1zM1199 65h1v3h-1zM1209 63h1v5h-1zM1220 65h1v3h-1zM1230 65h1v3h-1zM1240 65h1v3h-1zM1251 65h1v3h-1zM1261 63h1v5h-1zM1272 65h1v3h-1zM1282 65h1v3h-1zM1293 65h1v3h-1zM1303 65h1v3h-1zM1313 63h1v5h-1zM1324 65h1v3h-1zM1334 65h1v3h-1zM1345 65h1v3h-1zM1355 65h1v3h-1zM1366 63h1v5h-1zM1376 65h1v3h-1zM1386 65h1v3h-1zM1397 65h1v3h-1zM1407 65h1v3h-1zM1418 63h1v5h-1zM1428 65h1v3h-1zM1439 65h1v3h-1zM1449 65h1v3h-1zM1459 65h1v3h-1zM1470 63h1v5h-1zM1480 65h1v3h-1zM1491 65h1v3h-1zM1501 65h1v3h-1zM1512 65h1v3h-1zM1522 63h1v5h-1zM1532 65h1v3h-1zM1543 65h1v3h-1zM1553 65h1v3h-1zM1564 65h1v3h-1zM1574 63h1v5h-1zM1585 65h1v3h-1zM1595 65h1v3h-1zM1605 65h1v3h-1zM1616 65h1v3h-1zM1626 63h1v5h-1zM1637 65h1v3h-1zM1647 65h1v3h-1zM1658 65h1v3h-1zM1668 65h1v3h-1zM1678 63h1v5h-1zM1689 65h1v3h-1zM1699 65h1v3h-1zM1710 65h1v3h-1zM1720 65h1v3h-1zM1731 63h1v5h-1zM1741 65h1v3h-1zM1751 65h1v3h-1zM1762 65h1v3h-1zM1772 65h1v3h-1zM1783 63h1v5h-1zM1793 65h1v3h-1zM1803 63h1v5h-1zM52 933h1v5h-1zM1803 933h1v5h-1zM55 933h1v3h-1zM61 933h1v3h-1zM67 933h1v3h-1zM74 933h1v3h-1zM80 933h1v3h-1zM86 933h1v3h-1zM93 933h1v3h-1zM99 933h1v3h-1zM105 933h1v3h-1zM112 933h1v3h-1zM118 933h1v5h-1zM125 933h1v3h-1zM131 933h1v3h-1zM137 933h1v3h-1zM144 933h1v3h-1zM150 933h1v3h-1zM156 933h1v3h-1zM163 933h1v3h-1zM169 933h1v3h-1zM175 933h1v3h-1zM182 933h1v3h-1zM188 933h1v3h-1zM195 933h1v5h-1zM201 933h1v3h-1zM207 933h1v3h-1zM214 933h1v3h-1zM220 933h1v3h-1zM226 933h1v3h-1zM233 933h1v3h-1zM239 933h1v3h-1zM245 933h1v3h-1zM252 933h1v3h-1zM258 933h1v3h-1zM264 933h1v3h-1zM271 933h1v5h-1zM277 933h1v3h-1zM284 933h1v3h-1zM290 933h1v3h-1zM296 933h1v3h-1zM303 933h1v3h-1zM309 933h1v3h-1zM315 933h1v3h-1zM322 933h1v3h-1zM328 933h1v3h-1zM334 933h1v3h-1zM341 933h1v3h-1zM347 933h1v5h-1zM354 933h1v3h-1zM360 933h1v3h-1zM366 933h1v3h-1zM373 933h1v3h-1zM379 933h1v3h-1zM385 933h1v3h-1zM392 933h1v3h-1zM398 933h1v3h-1zM404 933h1v3h-1zM411 933h1v3h-1zM417 933h1v3h-1zM424 933h1v5h-1zM430 933h1v3h-1zM436 933h1v3h-1zM443 933h1v3h-1zM449 933h1v3h-1zM455 933h1v3h-1zM462 933h1v3h-1zM468 933h1v3h-1zM474 933h1v3h-1zM481 933h1v3h-1zM487 933h1v3h-1zM493 933h1v3h-1zM500 933h1v5h-1zM506 933h1v3h-1zM513 933h1v3h-1zM519 933h1v3h-1zM525 933h1v3h-1zM532 933h1v3h-1zM538 933h1v3h-1zM544 933h1v3h-1zM551 933h1v3h-1zM557 933h1v3h-1zM563 933h1v3h-1zM570 933h1v3h-1zM576 933h1v5h-1zM583 933h1v3h-1zM589 933h1v3h-1zM595 933h1v3h-1zM602 933h1v3h-1zM608 933h1v3h-1zM614 933h1v3h-1zM621 933h1v3h-1zM627 933h1v3h-1zM633 933h1v3h-1zM640 933h1v3h-1zM646 933h1v3h-1zM653 933h1v5h-1zM659 933h1v3h-1zM665 933h1v3h-1zM672 933h1v3h-1zM678 933h1v3h-1zM684 933h1v3h-1zM691 933h1v3h-1zM697 933h1v3h-1zM703 933h1v3h-1zM710 933h1v3h-1zM716 933h1v3h-1zM723 933h1v3h-1zM729 933h1v5h-1zM735 933h1v3h-1zM742 933h1v3h-1zM748 933h1v3h-1zM754 933h1v3h-1zM761 933h1v3h-1zM767 933h1v3h-1zM773 933h1v3h-1zM780 933h1v3h-1zM786 933h1v3h-1zM792 933h1v3h-1zM799 933h1v3h-1zM805 933h1v5h-1zM812 933h1v3h-1zM818 933h1v3h-1zM824 933h1v3h-1zM831 933h1v3h-1zM837 933h1v3h-1zM843 933h1v3h-1zM850 933h1v3h-1zM856 933h1v3h-1zM862 933h1v3h-1zM869 933h1v3h-1zM875 933h1v3h-1zM882 933h1v5h-1zM888 933h1v3h-1zM894 933h1v3h-1zM901 933h1v3h-1zM907 933h1v3h-1zM913 933h1v3h-1zM920 933h1v3h-1zM926 933h1v3h-1zM932 933h1v3h-1zM939 933h1v3h-1zM945 933h1v3h-1zM952 933h1v3h-1zM958 933h1v5h-1zM964 933h1v3h-1zM971 933h1v3h-1zM977 933h1v3h-1zM983 933h1v3h-1zM990 933h1v3h-1zM996 933h1v3h-1zM1002 933h1v3h-1zM1009 933h1v3h-1zM1015 933h1v3h-1zM1021 933h1v3h-1zM1028 933h1v3h-1zM1034 933h1v5h-1zM1041 933h1v3h-1zM1047 933h1v3h-1zM1053 933h1v3h-1zM1060 933h1v3h-1zM1066 933h1v3h-1zM1072 933h1v3h-1zM1079 933h1v3h-1zM1085 933h1v3h-1zM1091 933h1v3h-1zM1098 933h1v3h-1zM1104 933h1v3h-1zM1111 933h1v5h-1zM1117 933h1v3h-1zM1123 933h1v3h-1zM1130 933h1v3h-1zM1136 933h1v3h-1zM1142 933h1v3h-1zM1149 933h1v3h-1zM1155 933h1v3h-1zM1161 933h1v3h-1zM1168 933h1v3h-1zM1174 933h1v3h-1zM1181 933h1v3h-1zM1187 933h1v5h-1zM1193 933h1v3h-1zM1200 933h1v3h-1zM1206 933h1v3h-1zM1212 933h1v3h-1zM1219 933h1v3h-1zM1225 933h1v3h-1zM1231 933h1v3h-1zM1238 933h1v3h-1zM1244 933h1v3h-1zM1251 933h1v3h-1zM1257 933h1v3h-1zM1263 933h1v5h-1zM1270 933h1v3h-1zM1276 933h1v3h-1zM1282 933h1v3h-1zM1289 933h1v3h-1zM1295 933h1v3h-1zM1301 933h1v3h-1zM1308 933h1v3h-1zM1314 933h1v3h-1zM1320 933h1v3h-1zM1327 933h1v3h-1zM1333 933h1v3h-1zM1340 933h1v5h-1zM1346 933h1v3h-1zM1352 933h1v3h-1zM1359 933h1v3h-1zM1365 933h1v3h-1zM1371 933h1v3h-1zM1378 933h1v3h-1zM1384 933h1v3h-1zM1390 933h1v3h-1zM1397 933h1v3h-1zM1403 933h1v3h-1zM1410 933h1v3h-1zM1416 933h1v5h-1zM1422 933h1v3h-1zM1429 933h1v3h-1zM1435 933h1v3h-1zM1441 933h1v3h-1zM1448 933h1v3h-1zM1454 933h1v3h-1zM1460 933h1v3h-1zM1467 933h1v3h-1zM1473 933h1v3h-1zM1480 933h1v3h-1zM1486 933h1v3h-1zM1492 933h1v5h-1zM1499 933h1v3h-1zM1505 933h1v3h-1zM1511 933h1v3h-1zM1518 933h1v3h-1zM1524 933h1v3h-1zM1530 933h1v3h-1zM1537 933h1v3h-1zM1543 933h1v3h-1zM1549 933h1v3h-1zM1556 933h1v3h-1zM1562 933h1v3h-1zM1569 933h1v5h-1zM1575 933h1v3h-1zM1581 933h1v3h-1zM1588 933h1v3h-1zM1594 933h1v3h-1zM1600 933h1v3h-1zM1607 933h1v3h-1zM1613 933h1v3h-1zM1619 933h1v3h-1zM1626 933h1v3h-1zM1632 933h1v3h-1zM1639 933h1v3h-1zM1645 933h1v5h-1zM1651 933h1v3h-1zM1658 933h1v3h-1zM1664 933h1v3h-1zM1670 933h1v3h-1zM1677 933h1v3h-1zM1683 933h1v3h-1zM1689 933h1v3h-1zM1696 933h1v3h-1zM1702 933h1v3h-1zM1709 933h1v3h-1zM1715 933h1v3h-1zM1721 933h1v5h-1zM1728 933h1v3h-1zM1734 933h1v3h-1zM1740 933h1v3h-1zM1747 933h1v3h-1zM1753 933h1v3h-1zM1759 933h1v3h-1zM1766 933h1v3h-1zM1772 933h1v3h-1zM1779 933h1v3h-1zM1785 933h1v3h-1zM1791 933h1v3h-1zM1798 933h1v5h-1z"/>
<text x="44" y="74" font-size="11" text-anchor="end" >200</text>
<text x="44" y="95" font-size="11" text-anchor="end" >195</text>
<text x="44" y="117" font-size="11" text-anchor="end" >190</text>
<text x="44" y="138" font-size="11" text-anchor="end" >185</text>
<text x="44" y="160" font-size="11" text-anchor="end" >180</text>
<text x="44" y="181" font-size="11" text-anchor="end" >175</text>
<text x="44" y="203" font-size="11" text-anchor="end" >170</text>
<text x="44" y="224" font-size="11" text-anchor="end" >165</text>
<text x="44" y="246" font-size="11" text-anchor="end" >160</text>
<text x="44" y="267" font-size="11" text-anchor="end" >155</text>
<text x="44" y="289" font-size="11" text-anchor="end" >150</text>
<text x="44" y="310" font-size="11" text-anchor="end" >145</text>
<text x="44" y="332" font-size="11" text-anchor="end" >140</text>
<text x="44" y="353" font-size="11" text-anchor="end" >135</text>
<text x="44" y="375" font-size="11" text-anchor="end" >130</text>
<text x="44" y="396" font-size="11" text-anchor="end" >125</text>
<text x="44" y="418" font-size="11" text-anchor="end" >120</text>
<text x="44" y="439" font-size="11" text-anchor="end" >115</text>
<text x="44" y="461" font-size="11" text-anchor="end" >110</text>
<text x="44" y="482" font-size="11" text-anchor="end" >105</text>
<text x="44" y="504" font-size="11" text-anchor="end" >100</text>
<text x="44" y="525" font-size="11" text-anchor="end" >95</text>
<text x="44" y="547" font-size="11" text-anchor="end" >90</text>
<text x="44" y="568" font-size="11" text-anchor="end" >85</text>
<text x="44" y="590" font-size="11" text-anchor="end" >80</text>
<text x="44" y="611" font-size="11" text-anchor="end" >75</text>
<text x="44" y="633" font-size="11" text-anchor="end" >70</text>
<text x="44" y="654" font-size="11" text-anchor="end" >65</text>
<text x="44" y="676" font-size="11" text-anchor="end" >60</text>
<text x="44" y="697" font-size="11" text-anchor="end" >55</text>
<text x="44" y="719" font-size="11" text-anchor="end" >50</text>
<text x="44" y="740" font-size="11" text-anchor="end" >45</text>
<text x="44" y="762" font-size="11" text-anchor="end" >40</text>
<text x="44" y="783" font-size="11" text-anchor="end" >35</text>
<text x="44" y="805" font-size="11" text-anchor="end" >30</text>
<text x="44" y="826" font-size="11" text-anchor="end" >25</text>
<text x="44" y="848" font-size="11" text-anchor="end" >20</text>
<text x="44" y="869" font-size="11" text-anchor="end" >15</text>
<text x="44" y="891" font-size="11" text-anchor="end" >10</text>
<text x="44" y="912" font-size="11" text-anchor="end" >5</text>
<text x="44" y="934" font-size="11" text-anchor="end" >0</text>
<text x="52.5" y="61" font-size="11" text-anchor="middle" >1690</text>
<text x="114.5" y="61" font-size="11" text-anchor="middle" >1750</text>
<text x="166.5" y="61" font-size="11" text-anchor="middle" >1800</text>
<text x="218.5" y="61" font-size="11" text-anchor="middle" >1850</text>
<text x="271.5" y="61" font-size="11" text-anchor="middle" >1900</text>
<text x="323.5" y="61" font-size="11" text-anchor="middle" >1950</text>
<text x="375.5" y="61" font-size="11" text-anchor="middle" >2000</text>
<text x="427.5" y="61" font-size="11" text-anchor="middle" >2050</text>
<text x="479.5" y="61" font-size="11" text-anchor="middle" >2100</text>
<text x="531.5" y="61" font-size="11" text-anchor="middle" >2150</text>
<text x="583.5" y="61" font-size="11" text-anchor="middle" >2200</text>
<text x="636.5" y="61" font-size="11" text-anchor="middle" >2250</text>
<text x="688.5" y="61" font-size="11" text-anchor="middle" >2300</text>
<text x="740.5" y="61" font-size="11" text-anchor="middle" >2350</text>
<text x="792.5" y="61" font-size="11" text-anchor="middle" >2400</text>
<text x="844.5" y="61" font-size="11" text-anchor="middle" >2450</text>
<text x="896.5" y="61" font-size="11" text-anchor="middle" >2500</text>
<text x="948.5" y="61" font-size="11" text-anchor="middle" >2550</text>
<text x="1001.5" y="61" font-size="11" text-anchor="middle" >2600</text>
<text x="1053.5" y="61" font-size="11" text-anchor="middle" >2650</text>
<text x="1105.5" y="61" font-size="11" text-anchor="middle" >2700</text>
<text x="1157.5" y="61" font-size="11" text-anchor="middle" >2750</text>
<text x="1209.5" y="61" font-size="11" text-anchor="middle" >2800</text>
<text x="1261.5" y="61" font-size="11" text-anchor="middle" >2850</text>
<text x="1313.5" y="61" font-size="11" text-anchor="middle" >2900</text>
<text x="1366.5" y="61" font-size="11" text-anchor="middle" >2950</text>
<text x="1418.5" y="61" font-size="11" text-anchor="middle" >3000</text>
<text x="1470.5" y="61" font-size="11" text-anchor="middle" >3050</text>
<text x="1522.5" y="61" font-size="11" text-anchor="middle" >3100</text>
<text x="1574.5" y="61" font-size="11" text-anchor="middle" >3150</text>
<text x="1626.5" y="61" font-size="11" text-anchor="middle" >3200</text>
<text x="1678.5" y="61" font-size="11" text-anchor="middle" >3250</text>
<text x="1731.5" y="61" font-size="11" text-anchor="middle" >3300</text>
<text x="1803.5" y="61" font-size="11" text-anchor="middle" >3370</text>
<text x="52.5" y="949" font-size="11" text-anchor="middle" >21:25:39.963</text>
<text x="52.5" y="960" font-size="11" text-anchor="middle" >04/16/2026</text>
<text x="118.5" y="949" font-size="11" text-anchor="middle" >21:30:00.000</text>
<text x="118.5" y="960" font-size="11" text-anchor="middle" >04/16/2026</text>
<text x="195.5" y="949" font-size="11" text-anchor="middle" >21:35:00.000</text>
<text x="195.5" y="960" font-size="11" text-anchor="middle" >04/16/2026</text>
<text x="271.5" y="949" font-size="11" text-anchor="middle" >21:40:00.000</text>
<text x="271.5" y="960" font-size="11" text-anchor="middle" >04/16/2026</text>
<text x="347.5" y="949" font-size="11" text-anchor="middle" >21:45:00.000</text>
<text x="347.5" y="960" font-size="11" text-anchor="middle" >04/16/2026</text>
<text x="424.5" y="949" font-size="11" text-anchor="middle" >21:50:00.000</text>
<text x="424.5" y="960" font-size="11" text-anchor="middle" >04/16/2026</text>
<text x="500.5" y="949" font-size="11" text-anchor="middle" >21:55:00.000</text>
<text x="500.5" y="960" font-size="11" text-anchor="middle" >04/16/2026</text>
<text x="576.5" y="949" font-size="11" text-anchor="middle" >22:00:00.000</text>
<text x="576.5" y="960" font-size="11" text-anchor="middle" >04/16/2026</text>
<text x="653.5" y="949" font-size="11" text-anchor="middle" >22:05:00.000</text>
<text x="653.5" y="960" font-size="11" text-anchor="middle" >04/16/2026</text>
<text x="729.5" y="949" font-size="11" text-anchor="middle" >22:10:00.000</text>
<text x="729.5" y="960" font-size="11" text-anchor="middle" >04/16/2026</text>
<text x="805.5" y="949" font-size="11" text-anchor="middle" >22:15:00.000</text>
<text x="805.5" y="960" font-size="11" text-anchor="middle" >04/16/2026</text>
<text x="882.5" y="949" font-size="11" text-anchor="middle" >22:20:00.000</text>
<text x="882.5" y="960" font-size="11" text-anchor="middle" >04/16/2026</text>
<text x="958.5" y="949" font-size="11" text-anchor="middle" >22:25:00.000</text>
<text x="958.5" y="960" font-size="11" text-anchor="middle" >04/16/2026</text>
<text x="1034.5" y="949" font-size="11" text-anchor="middle" >22:30:00.000</text>
<text x="1034.5" y="960" font-size="11" text-anchor="middle" >04/16/2026</text>
<text x="1111.5" y="949" font-size="11" text-anchor="middle" >22:35:00.000</text>
<text x="1111.5" y="960" font-size="11" text-anchor="middle" >04/16/2026</text>
<text x="1187.5" y="949" font-size="11" text-anchor="middle" >22:40:00.000</text>
<text x="1187.5" y="960" font-size="11" text-anchor="middle" >04/16/2026</text>
<text x="1263.5" y="949" font-size="11" text-anchor="middle" >22:45:00.000</text>
<text x="1263.5" y="960" font-size="11" text-anchor="middle" >04/16/2026</text>
<text x="1340.5" y="949" font-size="11" text-anchor="middle" >22:50:00.000</text>
<text x="1340.5" y="960" font-size="11" text-anchor="middle" >04/16/2026</text>
<text x="1416.5" y="949" font-size="11" text-anchor="middle" >22:55:00.000</text>
<text x="1416.5" y="960" font-size="11" text-anchor="middle" >04/16/2026</text>
<text x="1492.5" y="949" font-size="11" text-anchor="middle" >23:00:00.000</text>
<text x="1492.5" y="960" font-size="11" text-anchor="middle" >04/16/2026</text>
<text x="1569.5" y="949" font-size="11" text-anchor="middle" >23:05:00.000</text>
<text x="1569.5" y="960" font-size="11" text-anchor="middle" >04/16/2026</text>
<text x="1645.5" y="949" font-size="11" text-anchor="middle" >23:10:00.000</text>
<text x="1645.5" y="960" font-size="11" text-anchor="middle" >04/16/2026</text>
<text x="1721.5" y="949" font-size="11" text-anchor="middle" >23:15:00.000</text>
<text x="1721.5" y="960" font-size="11" text-anchor="middle" >04/16/2026</text>
<text x="1803.5" y="949" font-size="11" text-anchor="middle" >23:20:21.243</text>
<text x="1803.5" y="960" font-size="11" text-anchor="middle" >04/16/2026</text>
<text x="925" y="974" font-size="11" text-anchor="middle" >Time</text>
<text x="809" y="16" font-size="11" text-anchor="start" font-weight="bold" textLength="185" lengthAdjust="spacingAndGlyphs" >AOS&#160;&#160;Thu 16 Apr 2026 23:20:10&#160;&#160;AOS</text>
<text x="728" y="28" font-size="11" text-anchor="start" font-weight="bold" textLength="95" lengthAdjust="spacingAndGlyphs" >CoordSystem:es18</text>
<text x="832" y="28" font-size="11" text-anchor="start" font-weight="bold" textLength="72" lengthAdjust="spacingAndGlyphs" >SensorID:es18</text>
<text x="916" y="28" font-size="11" text-anchor="start" font-weight="bold" textLength="48" lengthAdjust="spacingAndGlyphs" >Axis:sum</text>
<text x="977" y="28" font-size="11" text-anchor="start" font-weight="bold" textLength="97" lengthAdjust="spacingAndGlyphs" >Windowing:Hanning</text>
<text x="619" y="40" font-size="11" text-anchor="start" font-weight="bold" textLength="78" lengthAdjust="spacingAndGlyphs" >Cuttoff(Hz):200</text>
<text x="715" y="40" font-size="11" text-anchor="start" font-weight="bold" textLength="66" lengthAdjust="spacingAndGlyphs" >df(Hz):0.2441</text>
<text x="800" y="40" font-size="11" text-anchor="start" font-weight="bold" textLength="80" lengthAdjust="spacingAndGlyphs" >Sample/Sec:500</text>
<text x="901" y="40" font-size="11" text-anchor="start" font-weight="bold" textLength="72" lengthAdjust="spacingAndGlyphs" >PSD size:2048</text>
<text x="994" y="40" font-size="11" text-anchor="start" font-weight="bold" textLength="64" lengthAdjust="spacingAndGlyphs" >Overlap(%):0</text>
<text x="1083" y="40" font-size="11" text-anchor="start" font-weight="bold" textLength="101" lengthAdjust="spacingAndGlyphs" >TimeRes.(sec):4.096</text>
<rect x="1841" y="74" width="18" height="3" fill="#f05090"/>
<rect x="1841" y="79" width="18" height="857" fill="url(#cb)"/>
<rect x="1841" y="937" width="18" height="3" fill="#fff"/>
<text x="1869" y="83" font-size="11" text-anchor="start" >-5.00</text>
<text x="1869" y="511" font-size="11" text-anchor="start" >-9.00</text>
<text x="1869" y="940" font-size="11" text-anchor="start" >-13.00</text>
<text x="0" y="0" font-size="11" transform="translate(1909,445) rotate(90)">Amplitude(Log10(g^2/Hz))</text>
</svg></body></html>
